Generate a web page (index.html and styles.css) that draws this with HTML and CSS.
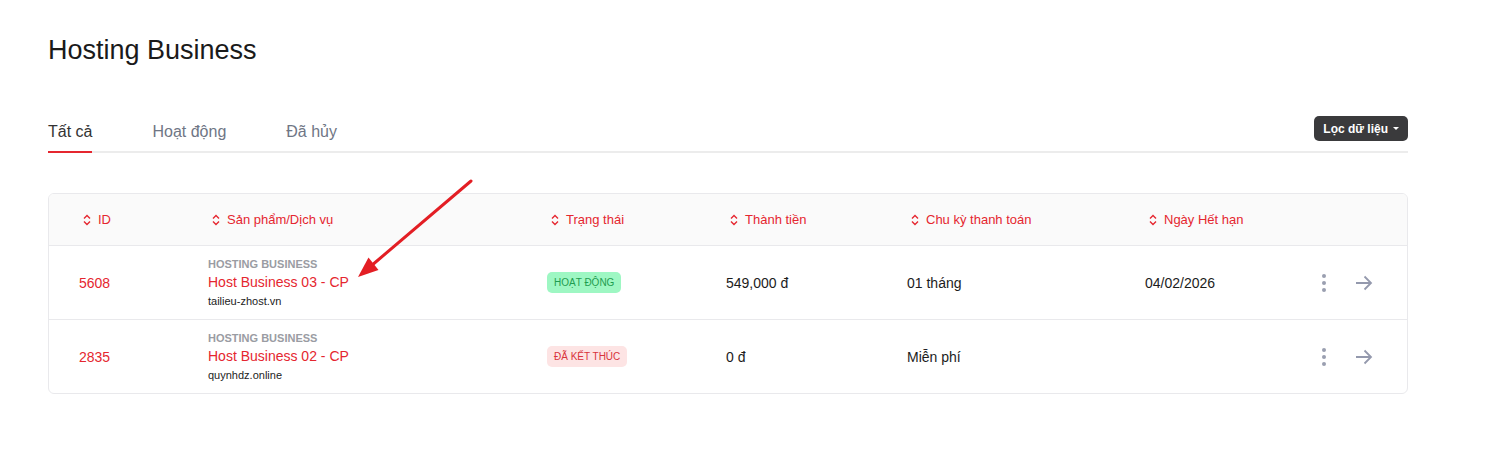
FILE: index.html
```html
<!DOCTYPE html>
<html lang="vi">
<head>
    <meta charset="UTF-8">
    <meta name="viewport" content="width=device-width, initial-scale=1.0">
    <title>Hosting Business</title>
    <link rel="stylesheet" href="styles.css">
</head>
<body>
    <div class="page">
        <h1>Hosting Business</h1>

        <div class="tabs-bar">
            <div class="tabs">
                <a class="tab active">Tất cả</a>
                <a class="tab">Hoạt động</a>
                <a class="tab">Đã hủy</a>
            </div>
            <button class="filter-btn">Lọc dữ liệu <span class="caret"></span></button>
        </div>

        <div class="table-card">
            <div class="table-row table-head">
                <div class="th"><svg class="sort" viewBox="0 0 8 12"><path d="M1 4.5 4 1.5 7 4.5M1 7.5 4 10.5 7 7.5"/></svg>ID</div>
                <div class="th"><svg class="sort" viewBox="0 0 8 12"><path d="M1 4.5 4 1.5 7 4.5M1 7.5 4 10.5 7 7.5"/></svg>Sản phẩm/Dịch vụ</div>
                <div class="th"><svg class="sort" viewBox="0 0 8 12"><path d="M1 4.5 4 1.5 7 4.5M1 7.5 4 10.5 7 7.5"/></svg>Trạng thái</div>
                <div class="th"><svg class="sort" viewBox="0 0 8 12"><path d="M1 4.5 4 1.5 7 4.5M1 7.5 4 10.5 7 7.5"/></svg>Thành tiền</div>
                <div class="th"><svg class="sort" viewBox="0 0 8 12"><path d="M1 4.5 4 1.5 7 4.5M1 7.5 4 10.5 7 7.5"/></svg>Chu kỳ thanh toán</div>
                <div class="th"><svg class="sort" viewBox="0 0 8 12"><path d="M1 4.5 4 1.5 7 4.5M1 7.5 4 10.5 7 7.5"/></svg>Ngày Hết hạn</div>
                <div class="th"></div>
            </div>

            <div class="table-row">
                <div class="td id">5608</div>
                <div class="td product">
                    <div class="group">HOSTING BUSINESS</div>
                    <div class="name">Host Business 03 - CP</div>
                    <div class="domain">tailieu-zhost.vn</div>
                </div>
                <div class="td"><span class="badge badge-active">HOẠT ĐỘNG</span></div>
                <div class="td">549,000 đ</div>
                <div class="td">01 tháng</div>
                <div class="td">04/02/2026</div>
                <div class="td actions">
                    <span class="kebab"><i></i><i></i><i></i></span>
                    <svg class="go" viewBox="0 0 18 16"><path d="M1 8H16M9.5 1.5 16 8 9.5 14.5"/></svg>
                </div>
            </div>

            <div class="table-row">
                <div class="td id">2835</div>
                <div class="td product">
                    <div class="group">HOSTING BUSINESS</div>
                    <div class="name">Host Business 02 - CP</div>
                    <div class="domain">quynhdz.online</div>
                </div>
                <div class="td"><span class="badge badge-ended">ĐÃ KẾT THÚC</span></div>
                <div class="td">0 đ</div>
                <div class="td">Miễn phí</div>
                <div class="td"></div>
                <div class="td actions">
                    <span class="kebab"><i></i><i></i><i></i></span>
                    <svg class="go" viewBox="0 0 18 16"><path d="M1 8H16M9.5 1.5 16 8 9.5 14.5"/></svg>
                </div>
            </div>
        </div>
    </div>

    <!-- pointer drawn on top of the table -->
    <svg class="pointer" width="1486" height="458" viewBox="0 0 1486 458">
        <line x1="471" y1="181" x2="371" y2="266" stroke="#e31e24" stroke-width="3" stroke-linecap="round"/>
        <polygon points="358,277 378.5,270 368.5,257.5" fill="#e31e24"/>
    </svg>
</body>
</html>
```

FILE: styles.css
```css
:root {
    --red: #e5262f;
    --text: #1c1c1c;
    --muted: #6f7685;
    --line: #e9e9ec;
}

body {
    margin: 0;
    font-family: 'Liberation Sans', Arial, sans-serif;
    color: var(--text);
    background: #fff;
}

.page {
    width: 1360px;
    padding: 24px 0 0 48px;
}

h1 {
    margin: 0;
    font-size: 27px;
    font-weight: 400;
    line-height: 52px;
    color: #1a1a1a;
}

/* Tabs */
.tabs-bar {
    margin-top: 37px;
    display: flex;
    justify-content: space-between;
    align-items: flex-start;
    border-bottom: 2px solid #ececec;
}

.tabs {
    display: flex;
    gap: 60px;
}

.tab {
    font-size: 16px;
    line-height: 20px;
    padding: 9px 0 9px;
    color: var(--muted);
    border-bottom: 2px solid transparent;
    margin-bottom: -2px;
    cursor: pointer;
}

.tab.active {
    color: #333;
    border-bottom-color: var(--red);
}

.filter-btn {
    margin-top: 3px;
    height: 25px;
    padding: 0 9px;
    background: #3a3a3c;
    color: #fff;
    border: none;
    border-radius: 5px;
    font-family: inherit;
    font-size: 12px;
    font-weight: 700;
    display: flex;
    align-items: center;
    gap: 5px;
    cursor: pointer;
}

.caret {
    width: 0;
    height: 0;
    border-left: 3px solid transparent;
    border-right: 3px solid transparent;
    border-top: 3px solid #fff;
}

/* Table */
.table-card {
    margin-top: 40px;
    border: 1px solid var(--line);
    border-radius: 6px;
    overflow: hidden;
}

.table-row {
    box-sizing: border-box;
    display: grid;
    grid-template-columns: 129px 339px 179px 181px 238px 165px 1fr;
    padding-left: 30px;
    height: 74px;
    align-items: center;
    border-top: 1px solid var(--line);
    font-size: 14px;
}

.table-head {
    height: 51px;
    border-top: none;
    background: #fafafa;
}

.th {
    display: flex;
    align-items: center;
    gap: 7px;
    padding-left: 4px;
    font-size: 13px;
    color: var(--red);
}

.sort {
    width: 8px;
    height: 12px;
    fill: none;
    stroke: var(--red);
    stroke-width: 1.4;
}

.td.id {
    color: var(--red);
}

.product {
    display: flex;
    flex-direction: column;
}

.group {
    font-size: 11px;
    font-weight: 700;
    color: #9a9ca3;
    line-height: 14px;
}

.name {
    color: var(--red);
    font-size: 14px;
    line-height: 22px;
}

.domain {
    font-size: 11px;
    line-height: 16px;
    color: #1c1c1c;
}

.badge {
    display: inline-block;
    font-size: 10px;
    line-height: 21px;
    padding: 0 7px;
    border-radius: 5px;
}

.badge-active {
    background: #9ef7c3;
    color: #1e9d50;
}

.badge-ended {
    background: #fde4e4;
    color: #d8333b;
}

.actions {
    display: flex;
    align-items: center;
    gap: 29px;
    padding-left: 12px;
}

.kebab {
    display: flex;
    flex-direction: column;
    gap: 3px;
}

.kebab i {
    width: 4px;
    height: 4px;
    border-radius: 50%;
    background: #9a9fb0;
}

.go {
    width: 18px;
    height: 16px;
    fill: none;
    stroke: #9499ad;
    stroke-width: 1.8;
}

.pointer {
    position: absolute;
    left: 0;
    top: 0;
    pointer-events: none;
}
```
